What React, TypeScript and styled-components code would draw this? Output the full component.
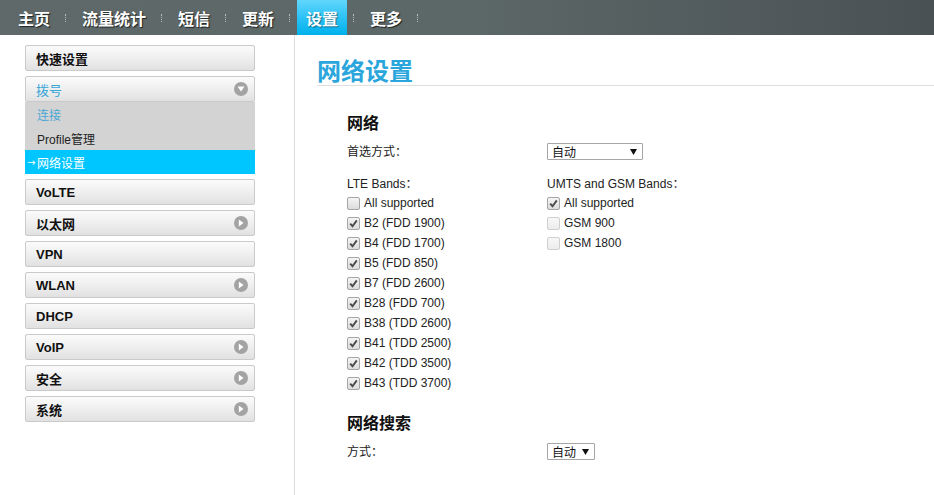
import React from "react";
import styled, { createGlobalStyle, css } from "styled-components";

const GlobalStyle = createGlobalStyle`
  html, body { margin: 0; padding: 0; background: #fff; }
  body {
    font-family: "Liberation Sans", Arial, "Noto Sans CJK SC", sans-serif;
    font-size: 12px;
    color: #333;
  }
  * { box-sizing: border-box; }
`;

const Page = styled.div`
  display: flex;
  flex-direction: column;
  width: 934px;
  height: 495px;
  overflow: hidden;
`;

const Header = styled.div`
  height: 35px;
  flex: 0 0 35px;
  display: flex;
  align-items: stretch;
  padding-left: 9px;
  background: linear-gradient(to right, #5f6969 0%, #5c6767 50%, #4a5154 100%);
`;

const NavItem = styled.div<{ $active?: boolean }>`
  display: flex;
  align-items: center;
  padding: 0 9px;
  font-family: "Noto Sans CJK SC", sans-serif;
  font-weight: 700;
  font-size: 16px;
  color: #fff;
  text-shadow: 1px 1px 1px #1c2324;
  ${(p) =>
    p.$active &&
    css`
      background: linear-gradient(to bottom, #62d6fc 0%, #2cc2f6 50%, #00b1ec 100%);
      text-shadow: 1px 1px 1px #106a8c;
    `}
`;

const NavSep = styled.div`
  align-self: center;
  width: 0;
  height: 8px;
  margin: 0 7px 0 6px;
  border-left: 1px dotted #b8bcbc;
`;

const Body = styled.div`
  flex: 1;
  display: flex;
`;

const Sidebar = styled.div`
  width: 295px;
  flex: 0 0 295px;
  padding: 10px 0 0 25px;
  border-right: 1px solid #dcdcdc;
`;

const Menu = styled.div`
  width: 230px;
  display: flex;
  flex-direction: column;
  gap: 5px;
`;

const MenuItem = styled.div<{ $open?: boolean }>`
  height: 26px;
  display: flex;
  align-items: center;
  justify-content: space-between;
  padding: 0 6px 0 10px;
  border: 1px solid #cacaca;
  border-radius: 2px;
  background: linear-gradient(to bottom, #fbfbfb 0%, #efefef 50%, #e1e1e1 100%);
  font-family: "Liberation Sans", Arial, "Noto Sans CJK SC", sans-serif;
  font-weight: 700;
  font-size: 13px;
  color: #111;
  ${(p) =>
    p.$open &&
    css`
      color: #3aa6d8;
      font-weight: 400;
      font-size: 13px;
    `}
`;

const Group = styled.div`
  display: flex;
  flex-direction: column;
`;

const SubMenu = styled.div`
  display: flex;
  flex-direction: column;
  background: #d3d3d3;
`;

const SubItem = styled.div<{ $variant?: "link" | "plain" | "active" }>`
  height: 24px;
  display: flex;
  align-items: center;
  padding-left: 12px;
  font-family: "Liberation Sans", Arial, "Noto Sans CJK SC", sans-serif;
  font-size: 12px;
  color: #222;
  ${(p) =>
    p.$variant === "link" &&
    css`
      color: #4aa7d6;
    `}
  ${(p) =>
    p.$variant === "active" &&
    css`
      background: #00c6ff;
      color: #fff;
      padding-left: 2px;
    `}
`;

const Arrow = styled.span`
  display: inline-block;
  width: 10px;
  font-family: "DejaVu Sans", sans-serif;
  font-size: 10px;
  color: #fff;
`;

const Circle = styled.span`
  width: 14px;
  height: 14px;
  border-radius: 50%;
  background: #a3a3a3;
  display: flex;
  align-items: center;
  justify-content: center;
`;

const Main = styled.div`
  flex: 1;
  padding: 20px 0 0 22px;
`;

const Title = styled.h1`
  margin: 0;
  height: 31px;
  line-height: 30px;
  font-family: "Noto Sans CJK SC", sans-serif;
  font-size: 24px;
  font-weight: 700;
  color: #2aa6dc;
  border-bottom: 1px solid #dedede;
`;

const Section = styled.div`
  padding-left: 30px;
  display: flex;
  flex-direction: column;
`;

const SectionTitle = styled.h2<{ $top: number }>`
  margin: ${(p) => p.$top}px 0 0 0;
  line-height: 20px;
  height: 20px;
  font-family: "Noto Sans CJK SC", sans-serif;
  font-size: 16px;
  font-weight: 700;
  color: #111;
`;

const FormRow = styled.div`
  margin-top: 10px;
  height: 20px;
  display: grid;
  grid-template-columns: 200px auto;
  align-items: start;
`;

const Label = styled.div`
  line-height: 20px;
  font-family: "Liberation Sans", Arial, "Noto Sans CJK SC", sans-serif;
  font-size: 12px;
  color: #222;
`;

const Select = styled.div<{ $w: number }>`
  width: ${(p) => p.$w}px;
  height: 17px;
  margin-top: 1px;
  display: flex;
  align-items: center;
  justify-content: space-between;
  padding: 0 5px 0 4px;
  border: 1px solid #a6a6a6;
  border-radius: 1px;
  background: #fff;
  font-family: "Noto Sans CJK SC", sans-serif;
  font-size: 12px;
  color: #111;
`;

const Bands = styled.div`
  margin-top: 14px;
  display: grid;
  grid-template-columns: 200px auto;
`;

const BandCol = styled.div`
  display: flex;
  flex-direction: column;
`;

const BandHead = styled.div`
  line-height: 17px;
  height: 17px;
  font-family: "Liberation Sans", Arial, "Noto Sans CJK SC", sans-serif;
  font-size: 12px;
  color: #222;
`;

const CheckRow = styled.div`
  height: 20px;
  display: flex;
  align-items: center;
  gap: 4px;
  font-family: "Liberation Sans", Arial, sans-serif;
  font-size: 12px;
  color: #222;
`;

const Box = styled.span<{ $disabled?: boolean }>`
  width: 13px;
  height: 13px;
  border: 1px solid #a5a5a5;
  border-radius: 2px;
  background: linear-gradient(to bottom, #f4f4f4, #dcdcdc);
  display: flex;
  align-items: center;
  justify-content: center;
  ${(p) =>
    p.$disabled &&
    css`
      border-color: #cfcfcf;
      background: linear-gradient(to bottom, #f7f7f7, #ececec);
    `}
`;

const ChevronDown = () => (
  <svg width="8" height="6" viewBox="0 0 8 6">
    <path d="M0.5 0.5 L7.5 0.5 L4 5.5 Z" fill="#fff" />
  </svg>
);

const ChevronRight = () => (
  <svg width="6" height="8" viewBox="0 0 6 8">
    <path d="M0.8 0.5 L5.5 4 L0.8 7.5 Z" fill="#fff" />
  </svg>
);

const Tri = () => (
  <svg width="7" height="6" viewBox="0 0 7 6">
    <path d="M0 0 L7 0 L3.5 6 Z" fill="#111" />
  </svg>
);

const Tick = () => (
  <svg width="9" height="9" viewBox="0 0 9 9">
    <path d="M1.2 4.6 L3.5 7.2 L7.8 1.4" fill="none" stroke="#4a4a4a" strokeWidth="1.9" />
  </svg>
);

const Check = ({ checked, disabled, label }: { checked?: boolean; disabled?: boolean; label: string }) => (
  <CheckRow>
    <Box $disabled={disabled}>{checked && <Tick />}</Box>
    <span>{label}</span>
  </CheckRow>
);

const navItems = ["主页", "流量统计", "短信", "更新", "设置", "更多"];

const lte = [
  { label: "All supported", checked: false },
  { label: "B2 (FDD 1900)", checked: true },
  { label: "B4 (FDD 1700)", checked: true },
  { label: "B5 (FDD 850)", checked: true },
  { label: "B7 (FDD 2600)", checked: true },
  { label: "B28 (FDD 700)", checked: true },
  { label: "B38 (TDD 2600)", checked: true },
  { label: "B41 (TDD 2500)", checked: true },
  { label: "B42 (TDD 3500)", checked: true },
  { label: "B43 (TDD 3700)", checked: true },
];

const menuAfter: { label: string; arrow: boolean }[] = [
  { label: "VoLTE", arrow: false },
  { label: "以太网", arrow: true },
  { label: "VPN", arrow: false },
  { label: "WLAN", arrow: true },
  { label: "DHCP", arrow: false },
  { label: "VoIP", arrow: true },
  { label: "安全", arrow: true },
  { label: "系统", arrow: true },
];

export default function App() {
  return (
    <Page>
      <GlobalStyle />
      <Header>
        {navItems.map((n) => (
          <React.Fragment key={n}>
            <NavItem $active={n === "设置"}>{n}</NavItem>
            <NavSep />
          </React.Fragment>
        ))}
      </Header>
      <Body>
        <Sidebar>
          <Menu>
            <MenuItem>快速设置</MenuItem>
            <Group>
              <MenuItem $open>
                拨号
                <Circle>
                  <ChevronDown />
                </Circle>
              </MenuItem>
              <SubMenu>
                <SubItem $variant="link">连接</SubItem>
                <SubItem $variant="plain">Profile管理</SubItem>
                <SubItem $variant="active">
                  <Arrow>→</Arrow>网络设置
                </SubItem>
              </SubMenu>
            </Group>
            {menuAfter.map((m) => (
              <MenuItem key={m.label}>
                {m.label}
                {m.arrow && (
                  <Circle>
                    <ChevronRight />
                  </Circle>
                )}
              </MenuItem>
            ))}
          </Menu>
        </Sidebar>
        <Main>
          <Title>网络设置</Title>
          <Section>
            <SectionTitle $top={26}>网络</SectionTitle>
            <FormRow>
              <Label>首选方式：</Label>
              <Select $w={96}>
                <span>自动</span>
                <Tri />
              </Select>
            </FormRow>
            <Bands>
              <BandCol>
                <BandHead>LTE Bands：</BandHead>
                {lte.map((b) => (
                  <Check key={b.label} label={b.label} checked={b.checked} />
                ))}
              </BandCol>
              <BandCol>
                <BandHead>UMTS and GSM Bands：</BandHead>
                <Check label="All supported" checked />
                <Check label="GSM 900" disabled />
                <Check label="GSM 1800" disabled />
              </BandCol>
            </Bands>
            <SectionTitle $top={19}>网络搜索</SectionTitle>
            <FormRow>
              <Label>方式：</Label>
              <Select $w={48}>
                <span>自动</span>
                <Tri />
              </Select>
            </FormRow>
          </Section>
        </Main>
      </Body>
    </Page>
  );
}
